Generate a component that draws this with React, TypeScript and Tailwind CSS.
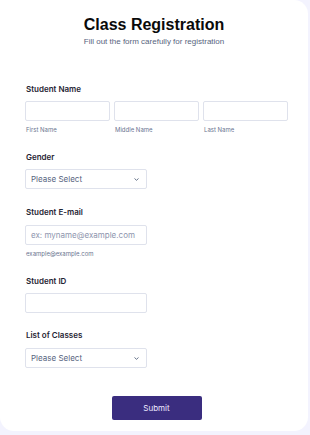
import React from "react";

const inter = { fontFamily: "Inter, 'Noto Sans', sans-serif" };

function Label({ children, className = "" }: { children: React.ReactNode; className?: string }) {
  return (
    <div className={`pl-[1px] text-[8px] leading-[10px] font-semibold text-[#1f2433] font-[Inter,sans-serif] ${className}`}>
      {children}
    </div>
  );
}

function Box({ className = "", children }: { className?: string; children?: React.ReactNode }) {
  return (
    <div
      className={`h-[20px] rounded-[2px] border border-[#dfe2ec] bg-white flex items-center ${className}`}
    >
      {children}
    </div>
  );
}

function SelectBox() {
  return (
    <Box className="w-[122px] justify-between pl-[5px] pr-[7px]">
      <span className="text-[8px] leading-[10px] text-[#57647e] font-[Inter,sans-serif]">Please Select</span>
      <svg width="5" height="3" viewBox="0 0 5 3" className="mt-[1px]">
        <path d="M0.5 0.5 L2.5 2.3 L4.5 0.5" fill="none" stroke="#57647e" strokeWidth="0.9" />
      </svg>
    </Box>
  );
}

function Sub({ children }: { children: React.ReactNode }) {
  return (
    <div className="mt-[5px] pl-[1px] text-[6px] leading-[8px] text-[#6b7590] font-[Inter,sans-serif]">{children}</div>
  );
}

export default function App() {
  return (
    <div className="w-[310px] h-[435px] bg-[#f3f3fe] overflow-hidden" style={inter}>
      <div className="w-[308px] h-[431px] bg-white rounded-tr-[14px] rounded-b-[14px] flex flex-col">
        <div className="pt-[15px] flex flex-col items-center">
          <div className="text-[16px] leading-[20px] font-bold text-[#0a0a0a] font-[Liberation_Sans,Arial,sans-serif]">
            Class Registration
          </div>
          <div className="mt-[2.4px] text-[8px] leading-[10px] text-[#57647e] font-[Liberation_Sans,Arial,sans-serif]">
            Fill out the form carefully for registration
          </div>
        </div>

        <div className="pl-[25px] mt-[37px] flex flex-col">
          <Label>Student Name</Label>
          <div className="mt-[6.5px] grid grid-cols-[84.5px_84.5px_84.5px] gap-x-[4.5px]">
            <div>
              <Box className="w-full" />
              <Sub>First Name</Sub>
            </div>
            <div>
              <Box className="w-full" />
              <Sub>Middle Name</Sub>
            </div>
            <div>
              <Box className="w-full" />
              <Sub>Last Name</Sub>
            </div>
          </div>

          <Label className="mt-[18px]">Gender</Label>
          <div className="mt-[7.5px]">
            <SelectBox />
          </div>

          <Label className="mt-[18px]">Student E-mail</Label>
          <div className="mt-[7.5px]">
            <Box className="w-[122px] pl-[5px]">
              <span className="text-[8px] leading-[10px] text-[#8d94ad] font-[Inter,sans-serif]">
                ex: myname@example.com
              </span>
            </Box>
            <Sub>example@example.com</Sub>
          </div>

          <Label className="mt-[18px]">Student ID</Label>
          <div className="mt-[7.5px]">
            <Box className="w-[122px]" />
          </div>

          <Label className="mt-[17px]">List of Classes</Label>
          <div className="mt-[7.5px]">
            <SelectBox />
          </div>

          <div className="mt-[28px] w-[263px] flex justify-center">
            <button className="w-[90px] h-[24px] rounded-[2px] bg-[#3a2d7f] text-[#eeeaff] text-[8px] font-normal font-[Inter,sans-serif]">
              Submit
            </button>
          </div>
        </div>
      </div>
    </div>
  );
}
